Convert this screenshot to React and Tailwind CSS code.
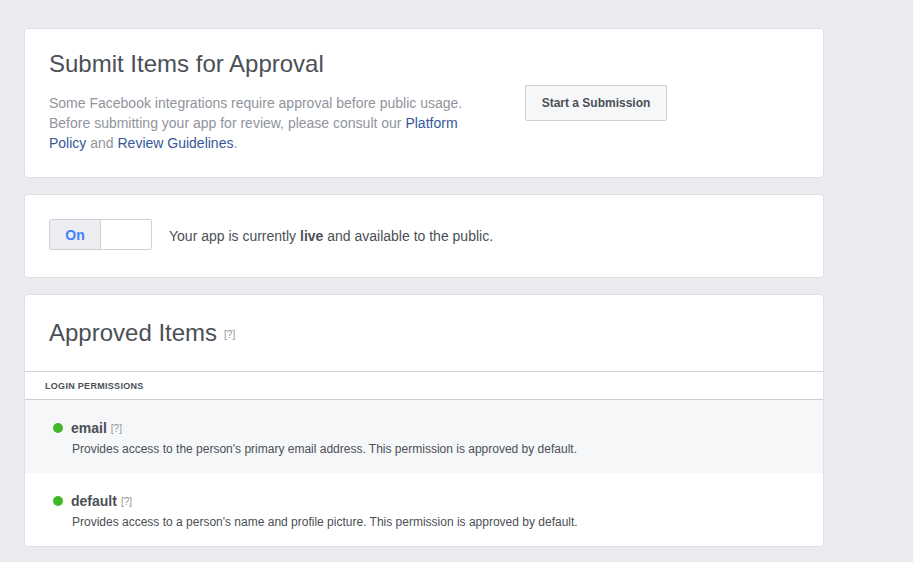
export default function App() {
  const font = { fontFamily: '"Liberation Sans", Arial, Helvetica, sans-serif' };
  return (
    <div className="min-h-[562px] w-[913px] bg-[#e9ebee] pt-[28px] pl-[24px]" style={font}>
      <div className="w-[800px] flex flex-col gap-4">
        {/* Card 1 */}
        <div className="h-[150px] bg-white border border-[#dddfe2] rounded-[3px] px-[24px] flex items-center">
          <div className="w-[420px] pb-[3px]">
            <h1 className="text-[24px] leading-[28px] text-[#4b4f56] font-normal">Submit Items for Approval</h1>
            <p className="mt-[15px] text-[14px] leading-[20px] text-[#90949c]">
              Some Facebook integrations require approval before public usage. Before submitting your app for review, please consult our{' '}
              <span className="text-[#365899]">Platform Policy</span> and{' '}
              <span className="text-[#365899]">Review Guidelines</span>.
            </p>
          </div>
          <button className="ml-[56px] w-[142px] h-[36px] bg-[#f6f7f9] border border-[#ced0d4] rounded-[2px] text-[12px] font-bold text-[#4b4f56]">
            Start a Submission
          </button>
        </div>

        {/* Card 2 */}
        <div className="h-[84px] bg-white border border-[#dddfe2] rounded-[3px] px-[24px] flex items-center">
          <div className="flex w-[103px] h-[31px] mb-[3px] border border-[#ced0d4] rounded-[2px] overflow-hidden">
            <div className="w-[51px] pt-[1px] bg-[#ebedf0] border-r border-[#ced0d4] flex items-center justify-center text-[14px] font-bold text-[#4080ff]">
              On
            </div>
            <div className="flex-1 bg-white" />
          </div>
          <p className="ml-[17px] text-[14px] text-[#4b4f56]">
            Your app is currently <b className="font-bold">live</b> and available to the public.
          </p>
        </div>

        {/* Card 3 */}
        <div className="bg-white border border-[#dddfe2] rounded-[3px] overflow-hidden">
          <div className="h-[77px] px-[24px] flex items-center border-b border-[#ccd0d5]">
            <h2 className="text-[24px] leading-[28px] text-[#4b4f56] font-normal">Approved Items</h2>
            <span className="ml-[7px] mt-[2px] text-[10px] text-[#90949c]">[?]</span>
          </div>
          <div className="h-[28px] px-[20px] pt-[2px] flex items-center border-b border-[#ccd0d5]">
            <span className="text-[9px] font-bold tracking-[0.3px] text-[#4b4f56] uppercase">Login Permissions</span>
          </div>
          <PermRow
            bg="bg-[#f6f7f9]"
            name="email"
            desc="Provides access to the person's primary email address. This permission is approved by default."
          />
          <PermRow
            bg="bg-white"
            name="default"
            desc="Provides access to a person's name and profile picture. This permission is approved by default."
          />
        </div>
      </div>
    </div>
  );
}

function PermRow({ bg, name, desc }) {
  return (
    <div className={`${bg} h-[73px] pt-[19px] pl-[28px] flex`}>
      <div className="h-[18px] flex items-center">
        <span className="w-[10px] h-[10px] rounded-full bg-[#42b72a]" />
      </div>
      <div className="ml-[8px]">
        <div className="h-[18px] flex items-center">
          <span className="text-[14px] font-bold text-[#4b4f56]">{name}</span>
          <span className="ml-[4px] text-[10px] text-[#90949c]">[?]</span>
        </div>
        <p className="mt-[4px] ml-[1px] text-[12px] leading-[16px] text-[#4b4f56]">{desc}</p>
      </div>
    </div>
  );
}
